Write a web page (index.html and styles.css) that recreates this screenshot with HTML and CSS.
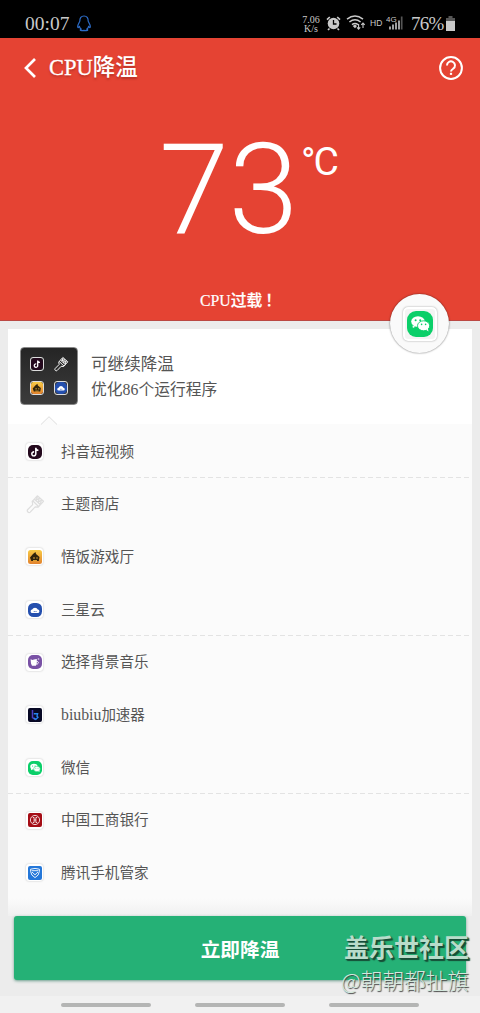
FILE: index.html
```html
<!DOCTYPE html>
<html lang="zh-CN">
<head>
<meta charset="utf-8">
<title>CPU降温</title>
<link rel="stylesheet" href="styles.css">
</head>
<body>
<svg class="defs" width="0" height="0" aria-hidden="true">
  <defs>
    <linearGradient id="gold" x1="0" y1="0" x2="0" y2="1"><stop offset="0" stop-color="#f8cb45"/><stop offset="1" stop-color="#e2822d"/></linearGradient>
    <symbol id="douyin" viewBox="0 0 14 14"><rect width="14" height="14" rx="5" fill="#24091d"/><path d="M7.8 2.8v6.1a2 2 0 1 1-1.7-2M7.8 3.2q.7 2 2.6 2" fill="none" stroke="#fff" stroke-width="1.5"/></symbol>
    <symbol id="rice" viewBox="0 0 14 14"><rect width="14" height="14" rx="2.5" fill="url(#gold)"/><path d="M2 7.5 5 4l2.5-2L8 4l3.5 3-.7 4H3.3z" fill="#30240b"/><path d="M5 8h2m1.2 0h1.6M5 10.6h4" stroke="#d9a034" stroke-width="1.1"/></symbol>
    <symbol id="cloud" viewBox="0 0 14 14"><rect width="14" height="14" rx="5.5" fill="#244fae"/><path d="M4.4 10a1.7 1.7 0 0 1-.2-3.400 3 3 0 0 1 5.600 0A1.700 1.700 0 0 1 9.600 10z" fill="#fff"/><path d="M5.800 8.500h.8m1 0h.8" stroke="#244fae"/></symbol>
    <symbol id="music" viewBox="0 0 14 14"><rect width="14" height="14" rx="5" fill="#7951a5"/><path d="M2.600 4.200 4.500 5 6 4.600 8.800 4v5l-1 1.800H4L3 8.600z" fill="#fff"/><path d="M8.500 6.500c2.200-.5 2.700 2.200.2 2.700M9.800 4h1.400" fill="none" stroke="#fff"/></symbol>
    <symbol id="biu" viewBox="0 0 14 14"><rect width="14" height="14" rx="2" fill="#080925"/><path d="M4.500 2v7.700l3 1.800" fill="none" stroke="#4b3fc4" stroke-width="1.500"/><path d="M5.800 5.700h3.800L9 8.200l1 1-2.200 2.200-2-1.400" fill="none" stroke="#2784f0" stroke-width="1.400"/></symbol>
    <symbol id="wechat" viewBox="0 0 26 26"><rect width="26" height="26" rx="9" fill="#0bcf69"/><path d="M5.500 14.500 5.900 17l2.500-1.300z" fill="#fff"/><ellipse cx="11" cy="10.600" rx="6.800" ry="5.300" fill="#fff"/><ellipse cx="16.600" cy="14.800" rx="6.100" ry="5" fill="#fff" stroke="#0bcf69" stroke-width=".9"/><path d="m19 18.800 2.500 1.600-.6-3z" fill="#fff"/><g fill="#0bcf69"><circle cx="8.600" cy="9.200" r="1"/><circle cx="13.200" cy="9.200" r="1"/><circle cx="14.600" cy="13.400" r=".8"/><circle cx="18.600" cy="13.400" r=".8"/></g></symbol>
    <symbol id="bank" viewBox="0 0 14 14"><rect width="14" height="14" rx="2" fill="#a50d16"/><circle cx="7" cy="7" r="4.600" fill="none" stroke="#fff" stroke-width=".8"/><path d="M4.800 4.500h1.300v5H4.800M9.200 4.500H7.900v5h1.300M6 7h2" fill="none" stroke="#fff" stroke-width=".8"/></symbol>
    <symbol id="shield" viewBox="0 0 14 14"><rect width="14" height="14" rx="2" fill="#2477d9"/><path d="M2.600 3.200Q7 1.600 11.400 3.200v2.200Q11 9.600 7 11.600 3 9.600 2.600 5.400z" fill="none" stroke="#fff" stroke-width=".9"/><path d="M3.600 4.700h6.800M4 6l3 2.800L10 6" fill="none" stroke="#fff" stroke-width=".9"/></symbol>
    <symbol id="brush" viewBox="0 0 20 20"><path d="M12.300 1.800 18.500 7.300l-5.300 5.900-3-.3-5 5.200c-1.400 1.300-4-.8-2.400-2.600l4.900-4.900L7.200 7.500zM7.900 7l5.900 5.700M9.500 5.200l5.900 5.600M12.500 2.500l-1.400 3.800 3.200-2-1.200 4 3.400-2.300-1.200 4" fill="none" stroke="currentColor" stroke-width="1.200" stroke-linejoin="round"/></symbol>
  </defs>
</svg>
<div class="phone">
  <header class="status">
    <span class="clock">00:07</span>
    <svg class="qq" width="14" height="17" viewBox="0 0 14 17"><path d="M7 1C4 1 2.800 3.200 2.800 6.200L1 10q-.7 2.400.2 2.600l1.300-1q.5 1.700 1.600 2.500-1 .5-.8 1.100.3.800 3.700.2 3.400.6 3.700-.2.2-.6-.8-1.100 1.100-.8 1.600-2.500l1.300 1q.9-.2.2-2.600l-1.800-3.800C11.200 3.200 10 1 7 1z" fill="none" stroke="#2c6bc6" stroke-width="1.200"/></svg>
    <span class="speed">7.06<br>K/s</span>
    <svg class="alarm" width="15" height="15" viewBox="0 0 15 15"><circle cx="7.500" cy="7.500" r="5.800" fill="#c9c9c9"/><path d="M1 3.700 3.800 1M14 3.700 11.200 1M3.500 12.500 2 14M11.500 12.500 13 14" stroke="#c9c9c9" stroke-width="1.700"/><path d="M7.500 4v4h3" fill="none" stroke="#000" stroke-width="1.300"/></svg>
    <svg class="wifi" width="20" height="16" viewBox="0 0 20 16"><g fill="none" stroke="#c9c9c9" stroke-width="1.500"><path d="M1 4.200q8-6.300 16 0M3.400 7q5.600-4.600 11.200 0M6 9.600q3-2.400 6 0"/></g><path d="m6.700 11 2.300-1.500 2 1.500L9 13.300z" fill="#c9c9c9"/><path d="M12.600 9v5m-1.600-1.700 1.600 1.900 1.600-1.900M17 13V8m-1.700 1.900L17 8l1.700 1.900" fill="none" stroke="#c9c9c9" stroke-width="1.100"/></svg>
    <span class="hd">HD</span>
    <svg class="signal" width="17" height="16" viewBox="0 0 17 16"><text x="0" y="6.500" class="net">4G</text><path d="M4 14.500v-3M7 14.500v-5M10 14.500V7.500M13 14.500v-9" stroke="#c9c9c9" stroke-width="1.600"/><path d="M15.700 14.500v-13" stroke="#555" stroke-width="1.700"/></svg>
    <span class="percent">76%</span>
    <svg class="battery" width="9" height="15" viewBox="0 0 9 15"><path d="M2.500 0h4v2H9v3H0V2h2.500z" fill="#565656"/><path d="M0 5h9v10H0z" fill="#c9c9c9"/></svg>
  </header>
  <section class="hero">
    <div class="titlebar">
      <svg width="13" height="22" viewBox="0 0 13 22"><path d="M11 2 2 11l9 9" fill="none" stroke="#fff" stroke-width="2.700"/></svg>
      <h1>CPU<span>降温</span></h1>
      <svg class="help" width="24" height="24" viewBox="0 0 24 24"><circle cx="12" cy="12" r="10.900" fill="none" stroke="#fff" stroke-width="2"/><path d="M8 9.500a4 4 0 1 1 6.200 3.200C12.500 13.800 12 14.100 12 15.500" fill="none" stroke="#fff" stroke-width="2"/><path d="M10.900 16.800h2.200v2.100h-2.200z" fill="#fff"/></svg>
    </div>
    <div class="temperature"><span class="degrees">73</span><span class="unit">°C</span></div>
    <p class="warning">CPU过载<span>！</span></p>
    <div class="bubble"><div class="bubble-icon"><svg width="26" height="26"><use href="#wechat"/></svg></div></div>
  </section>
  <main class="card">
    <div class="summary">
      <div class="folder">
        <svg class="mini" width="14" height="14"><use href="#douyin"/></svg>
        <svg class="mini-brush" width="16" height="16"><use href="#brush"/></svg>
        <svg class="mini" width="14" height="14"><use href="#rice"/></svg>
        <svg class="mini" width="14" height="14"><use href="#cloud"/></svg>
      </div>
      <div class="summary-text"><strong>可继续降温</strong><span>优化86个运行程序</span></div>
      <svg class="pointer" width="18" height="9" viewBox="0 0 18 9"><path d="M0 9 9 .7 18 9z" fill="#fbfbfb"/><path d="M1 8.500 9 .7l8 7.800" fill="none" stroke="#dedede"/></svg>
    </div>
    <ul class="apps">
      <li class="app divided"><span class="tile"><svg width="14" height="14"><use href="#douyin"/></svg></span><span>抖音短视频</span></li>
      <li class="app"><svg class="brush" width="20" height="20"><use href="#brush"/></svg><span>主题商店</span></li>
      <li class="app"><span class="tile"><svg width="14" height="14"><use href="#rice"/></svg></span><span>悟饭游戏厅</span></li>
      <li class="app divided"><span class="tile"><svg width="14" height="14"><use href="#cloud"/></svg></span><span>三星云</span></li>
      <li class="app"><span class="tile"><svg width="14" height="14"><use href="#music"/></svg></span><span>选择背景音乐</span></li>
      <li class="app"><span class="tile"><svg width="14" height="14"><use href="#biu"/></svg></span><span class="latin">biubiu<span>加速器</span></span></li>
      <li class="app divided"><span class="tile"><svg width="14" height="14"><use href="#wechat"/></svg></span><span>微信</span></li>
      <li class="app"><span class="tile"><svg width="14" height="14"><use href="#bank"/></svg></span><span>中国工商银行</span></li>
      <li class="app"><span class="tile"><svg width="14" height="14"><use href="#shield"/></svg></span><span>腾讯手机管家</span></li>
    </ul>
  </main>
  <footer class="action"><button class="cool">立即降温</button></footer>
  <nav class="navigation"><i></i><i></i><i></i></nav>
  <div class="watermark"><b>盖乐世社区</b><span>@朝朝都扯旗</span></div>
</div>
</body>
</html>
```
FILE: styles.css
```css
* { box-sizing: border-box; }
body { margin: 0; font-family: "Liberation Serif", "Noto Sans CJK SC", serif; }
.defs { position: absolute; }
.phone { position: relative; display: flex; flex-direction: column; width: 480px; height: 1013px; overflow: hidden; background: #ececec; }

.status { flex: none; height: 38px; padding: 8px 0 0 25px; display: flex; align-items: center; background: #000; color: #c9c9c9; }
.clock { width: 45px; padding-top: 1px; font-size: 19.500px; line-height: 30px; white-space: nowrap; }
.qq { margin-left: 7px; }
.speed { width: 20px; margin-left: 210px; padding-top: 1px; font-size: 10px; line-height: 9px; text-align: center; white-space: nowrap; }
.alarm { margin-left: 5px; }
.wifi { margin-left: 5px; }
.hd { width: 13px; margin-left: 4px; font: 8.500px "Liberation Sans", sans-serif; }
.signal { margin-left: 3px; }
.net { font: 8px "Liberation Sans", sans-serif; fill: #c9c9c9; }
.percent { width: 33px; margin-left: 8px; padding-top: 2px; font-size: 19px; letter-spacing: -.7px; white-space: nowrap; }
.battery { margin-left: 2px; }

.hero { position: relative; flex: none; height: 283px; background: #e54333; border-bottom: 1px solid #bb4843; color: #fff; display: flex; flex-direction: column; }
.titlebar { height: 60px; display: flex; align-items: center; padding: 0 17px 0 24px; }
.titlebar h1 { margin: 0 0 0 12px; font-size: 22.500px; line-height: 30px; font-weight: 500; text-shadow: 0 2px 2px #8e231b80; -webkit-text-stroke: .3px #fff; }
.titlebar h1 span { -webkit-text-stroke: 0; }
.help { margin-left: auto; }
.temperature { display: flex; height: 130px; margin-top: 20px; padding-left: 159px; font-family: Roboto, sans-serif; }
.degrees { width: 140px; padding-top: 2px; font-size: 126px; line-height: 140px; font-weight: 300; letter-spacing: -.5px; white-space: nowrap; }
.unit { padding: 18px 0 0 2px; font-size: 39px; line-height: 52px; letter-spacing: -2px; }
.warning { margin: 42px 0 0 200px; font-size: 15.800px; line-height: 22px; font-weight: 500; -webkit-text-stroke: .2px #fff; }
.warning span { margin-left: 3px; }
.bubble { position: absolute; left: 390px; top: 256px; width: 59px; height: 59px; border-radius: 50%; background: #fafafa; display: grid; place-items: center; box-shadow: 0 0 2px #0009; z-index: 2; }
.bubble-icon { width: 34px; height: 34px; border-radius: 5px; display: grid; place-items: center; background: #f4f4f4; border: 2px solid #fff; box-shadow: 0 0 2px #999; }

.card { flex: none; width: 464px; height: 587px; margin: 8px auto 0; background: linear-gradient(#fbfbfb 0 97%, #f0f0f0 100%); }
.summary { position: relative; height: 95px; padding: 18px 12px; display: flex; background: #fff; }
.folder { width: 58px; height: 58px; padding: 4px; display: grid; grid-template-columns: 1fr 1fr; grid-template-rows: 1fr 1fr; place-items: center; border: 1px solid #888; border-radius: 4px; background: linear-gradient(#252525, #3c3c3c); }
.mini { border: 1px solid #ddd; border-radius: 3px; }
.mini-brush { color: #fff; }
.summary-text { display: flex; flex-direction: column; margin: 6px 0 0 13px; color: #555; }
.summary-text strong { font-size: 16.600px; line-height: 24px; font-weight: 400; }
.summary-text span { font-size: 15.800px; line-height: 25px; }
.pointer { position: absolute; left: 32px; top: 87px; }
.apps { list-style: none; margin: 0; padding: 1.300px 0 0; }
.app { display: flex; align-items: center; height: 52.670px; padding-left: 18px; color: #555; font-size: 14.600px; line-height: 22px; }
.app > :first-child { flex: none; margin-right: 18px; }
.divided { background: repeating-linear-gradient(90deg, #e3e3e3 0 5px, transparent 5px 8px) bottom / 100% 1px no-repeat; }
.tile { width: 17px; height: 17px; display: grid; place-items: center; border-radius: 3px; background: #fff; box-shadow: 0 0 2px #bbb; }
.app > .brush { margin-left: -1px; margin-right: 16px; color: #dedede; }
.latin { font-size: 15.800px; }
.latin span { font-size: 14.500px; }

.action { flex: none; padding: 0 14px; }
.cool { display: block; width: 452px; height: 64px; padding: 3px 0 0; border: 0; border-radius: 3px; background: #25b176; color: #fff; font: 700 19.700px/30px "Liberation Serif", "Noto Sans CJK SC", serif; box-shadow: 0 1px 3px #1c70539e; }
.navigation { flex: none; height: 17px; margin-top: 16px; padding: 7px 61px 0; display: flex; justify-content: space-between; background: #f1f1f1; }
.navigation i { width: 90px; height: 4px; border-radius: 2px; background: #b4b5b4; }
.watermark { position: absolute; left: 341px; top: 928px; width: 130px; height: 68px; font-family: "Noto Sans CJK SC", sans-serif; white-space: nowrap; }
.watermark b { display: block; padding-left: 3px; font-size: 25px; line-height: 37px; color: #b8dcca; text-shadow: 1px 1px 1px #174e37, 2px 2px 1px #174e37; }
.watermark span { display: block; font-size: 21.700px; line-height: 29px; font-weight: 300; color: #d3e8dd; text-shadow: 1px 1px 1px #444; }
```
